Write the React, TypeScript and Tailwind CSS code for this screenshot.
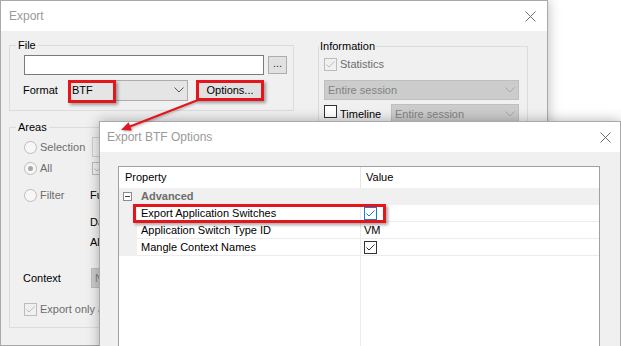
import React from "react";

const XIcon = () => (
  <svg width="11" height="11" viewBox="0 0 11 11" className="block">
    <line x1="0.5" y1="0.5" x2="10.5" y2="10.5" stroke="#6e6e6e" strokeWidth="1" />
    <line x1="10.5" y1="0.5" x2="0.5" y2="10.5" stroke="#6e6e6e" strokeWidth="1" />
  </svg>
);

const Chevron = ({ color }: { color: string }) => (
  <svg width="10" height="6" viewBox="0 0 10 6" className="block">
    <polyline points="0.5,0.5 5,5 9.5,0.5" fill="none" stroke={color} strokeWidth="1" />
  </svg>
);

const CheckMark = ({ color }: { color: string }) => (
  <svg width="11" height="11" viewBox="0 0 11 11" className="block">
    <polyline points="1.5,5.5 4,8 9.5,2.5" fill="none" stroke={color} strokeWidth="1" />
  </svg>
);

export default function App() {
  return (
    <div className="relative w-[621px] h-[346px] bg-white overflow-hidden font-['Liberation_Sans',Arial,sans-serif] text-[11px] text-black">
      {/* Export window */}
      <div className="absolute left-0 top-0 w-[548px] h-[346px] border border-[#a9a9a9] bg-[#f0f0f0] shadow-[0_0_12px_rgba(0,0,0,0.28)] flex flex-col">
        <div className="h-[30px] shrink-0 bg-white flex items-center justify-between pl-[8px] pr-[11px]">
          <span className="text-[12px] text-[#9a9a9a]">Export</span>
          <XIcon />
        </div>
        <div className="flex pl-[8px] gap-[24px]">
          <div className="w-[285px] flex flex-col pt-[6px]">
            <fieldset className="border border-[#dcdcdc] pb-[9px]">
              <legend className="ml-[6px] px-[2px] leading-[16px]">File</legend>
              <div className="flex items-center mt-[2px] ml-[14px] h-[20px]">
                <div className="w-[240px] h-[20px] bg-white border border-[#7a7a7a]" />
                <div className="ml-[4px] w-[19px] h-[18px] bg-[#e1e1e1] border border-[#adadad] flex items-center justify-center leading-none text-[#1a1a60] pb-[3px]">...</div>
              </div>
              <div className="flex items-center mt-[4px] ml-[13px] h-[22px]">
                <span className="w-[45px]">Format</span>
                <div className="w-[120px] h-[21px] bg-[#e5e5e5] border border-[#adadad] flex items-center justify-between pl-[3px] pr-[3px]">
                  <span>BTF</span>
                  <Chevron color="#555555" />
                </div>
                <div className="ml-[8px] w-[68px] h-[21px] bg-[#e1e1e1] border border-[#adadad] flex items-center justify-center">Options...</div>
              </div>
            </fieldset>
            <fieldset className="mt-[8px] border border-[#dcdcdc] pb-[10px]">
              <legend className="ml-[6px] px-[2px] leading-[16px]">Areas</legend>
              <div className="flex items-center mt-[2px] ml-[14px] h-[20px]">
                <div className="w-[68px] flex items-center">
                  <span className="w-[13px] h-[13px] rounded-full border border-[#bcbcbc] bg-[#f7f7f7]" />
                  <span className="ml-[3px] text-[#6d6d6d]">Selection</span>
                </div>
                <div className="w-[150px] h-[20px] border border-[#cccccc] bg-[#f0f0f0]" />
              </div>
              <div className="flex items-center mt-[3px] ml-[14px] h-[16px]">
                <div className="w-[68px] flex items-center">
                  <span className="w-[13px] h-[13px] rounded-full border border-[#bcbcbc] bg-[#f7f7f7] flex items-center justify-center">
                    <span className="w-[5px] h-[5px] rounded-full bg-[#a8a8a8]" />
                  </span>
                  <span className="ml-[3px] text-[#6d6d6d]">All</span>
                </div>
                <span className="w-[13px] h-[13px] border border-[#bcbcbc] flex items-center justify-center">
                  <CheckMark color="#bcbcbc" />
                </span>
              </div>
              <div className="flex items-center mt-[9px] ml-[14px] h-[20px]">
                <div className="w-[66px] flex items-center">
                  <span className="w-[13px] h-[13px] rounded-full border border-[#bcbcbc] bg-[#f7f7f7]" />
                  <span className="ml-[3px] text-[#6d6d6d]">Filter</span>
                </div>
                <span>Functions</span>
              </div>
              <div className="flex items-center mt-[7px] ml-[80px] h-[20px]">
                <span>Data</span>
              </div>
              <div className="flex items-center ml-[80px] h-[20px]">
                <span>All</span>
              </div>
              <div className="flex items-center mt-[16px] ml-[13px] h-[20px]">
                <span className="w-[68px]">Context</span>
                <div className="w-[150px] h-[20px] bg-[#cccccc] border border-[#bfbfbf] flex items-center pl-[3px] text-[#838383]">None</div>
              </div>
              <div className="flex items-center mt-[13px] ml-[14px] h-[16px]">
                <span className="w-[13px] h-[13px] border border-[#bcbcbc] flex items-center justify-center">
                  <CheckMark color="#bcbcbc" />
                </span>
                <span className="ml-[3px] text-[#6d6d6d]">Export only active</span>
              </div>
            </fieldset>
          </div>
          <div className="w-[210px] pt-[7px]">
            <fieldset className="border border-[#dcdcdc] h-[120px]">
              <legend className="ml-0 px-[1px] leading-[16px]">Information</legend>
              <div className="flex items-center mt-[2px] ml-[5px] h-[16px]">
                <span className="w-[13px] h-[13px] border border-[#bcbcbc] flex items-center justify-center">
                  <CheckMark color="#bcbcbc" />
                </span>
                <span className="ml-[3px] text-[#6d6d6d]">Statistics</span>
              </div>
              <div className="mt-[8px] ml-[5px] w-[195px] h-[20px] bg-[#cccccc] border border-[#bfbfbf] flex items-center justify-between pl-[3px] pr-[3px] text-[#838383]">
                <span>Entire session</span>
                <Chevron color="#a8a8a8" />
              </div>
              <div className="flex items-start mt-[4px] ml-[5px]">
                <span className="mt-[1px] w-[13px] h-[13px] border border-[#333333] bg-white" />
                <span className="ml-[3px] w-[51px] leading-[16px] mt-[2px]">Timeline</span>
                <div className="w-[128px] h-[20px] bg-[#cccccc] border border-[#bfbfbf] flex items-center justify-between pl-[3px] pr-[3px] text-[#838383]">
                  <span>Entire session</span>
                  <Chevron color="#a8a8a8" />
                </div>
              </div>
            </fieldset>
          </div>
        </div>
      </div>

      {/* Export BTF Options window */}
      <div className="absolute left-[99px] top-[121px] w-[522px] h-[240px] border border-[#a9a9a9] bg-[#f0f0f0] shadow-[0_0_12px_rgba(0,0,0,0.3)] flex flex-col">
        <div className="h-[30px] shrink-0 bg-white flex items-center justify-between pl-[7px] pr-[9px]">
          <span className="text-[12px] text-[#9a9a9a]">Export BTF Options</span>
          <XIcon />
        </div>
        <div className="pl-[18px] pt-[14px]">
          <div className="w-[482px] h-[200px] border border-[#a0a0a0] bg-white flex flex-col">
            <div className="h-[21px] flex shrink-0">
              <div className="w-[241px] pl-[6px] flex items-center">Property</div>
              <div className="w-px bg-[#e5e5e5]" />
              <div className="pl-[5px] flex items-center">Value</div>
            </div>
            <div className="h-[17px] bg-[#f0f0f0] flex items-center shrink-0">
              <span className="ml-[4px] w-[9px] h-[9px] border border-[#8c8c8c] bg-white flex items-center justify-center">
                <span className="w-[5px] h-px bg-[#444444]" />
              </span>
              <span className="ml-[9px] font-bold text-[#6d6d6d]">Advanced</span>
            </div>
            {[
              { name: "Export Application Switches", v: "blue" },
              { name: "Application Switch Type ID", v: "VM" },
              { name: "Mangle Context Names", v: "dark" },
            ].map((r) => (
              <div key={r.name} className="h-[17px] flex shrink-0">
                <div className="w-[18px] bg-[#f0f0f0]" />
                <div className="w-[223px] pl-[4px] flex items-center border-b border-[#ececec]">{r.name}</div>
                <div className="w-px bg-[#ececec]" />
                <div className="flex-1 pl-[3px] flex items-center border-b border-[#ececec]">
                  {r.v === "blue" && (
                    <span className="w-[13px] h-[13px] border border-[#1979d4] bg-white flex items-center justify-center">
                      <CheckMark color="#1979d4" />
                    </span>
                  )}
                  {r.v === "dark" && (
                    <span className="w-[13px] h-[13px] border border-[#333333] bg-white flex items-center justify-center">
                      <CheckMark color="#333333" />
                    </span>
                  )}
                  {r.v === "VM" && <span>VM</span>}
                </div>
              </div>
            ))}
            <div className="flex-1 flex">
              <div className="w-[241px]" />
              <div className="w-px bg-[#ececec]" />
            </div>
          </div>
        </div>
      </div>

      {/* Red highlight annotations */}
      <div className="absolute left-[68px] top-[80px] w-[48px] h-[23px] border-[3px] border-[#e4161b] shadow-[2px_2px_3px_rgba(0,0,0,0.35)]" />
      <div className="absolute left-[196px] top-[80px] w-[68px] h-[21px] border-[3px] border-[#e4161b] shadow-[2px_2px_3px_rgba(0,0,0,0.35)]" />
      <div className="absolute left-[133px] top-[204px] w-[253px] h-[19px] border-[3px] border-[#e4161b] shadow-[2px_2px_3px_rgba(0,0,0,0.35)]" />
      <svg className="absolute left-0 top-0 drop-shadow-[1px_1px_1px_rgba(0,0,0,0.3)]" width="621" height="346" viewBox="0 0 621 346">
        <line x1="198" y1="100" x2="130" y2="126.5" stroke="#e4161b" strokeWidth="2" />
        <polygon points="121,130 131.8,130.4 128.6,122.2" fill="#e4161b" />
      </svg>
    </div>
  );
}
